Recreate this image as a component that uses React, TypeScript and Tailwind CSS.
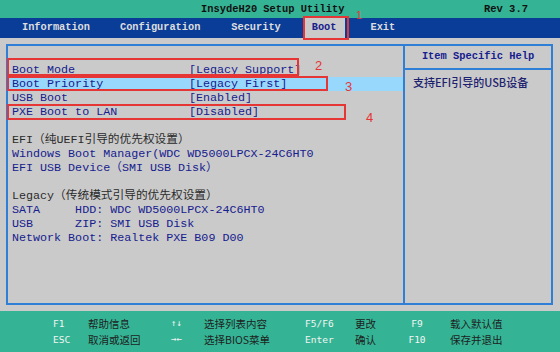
import React from "react";

const mono = { fontFamily: '"Liberation Mono", "Noto Sans CJK SC", monospace' };
const cjk = { fontFamily: '"Noto Sans CJK SC", "Noto Sans", sans-serif' };
const keyFont = { fontFamily: '"DejaVu Sans Mono", "Liberation Mono", monospace' };

function Row({ label, value, hl, dark }: { label: string; value?: string; hl?: boolean; dark?: boolean }) {
  return (
    <div
      className={`h-[14px] leading-[15px] pl-[4px] flex whitespace-pre ${hl ? "bg-[#99d8fd]" : ""} ${
        dark ? "text-[#2a2a2a]" : "text-[#16208e]"
      }`}
    >
      <span className={value !== undefined ? "w-[177px] shrink-0" : ""}>{label}</span>
      {value !== undefined && <span>{value}</span>}
    </div>
  );
}

export default function App() {
  const footer: [string, string, string, string, string, string, string, string][] = [
    ["F1", "帮助信息", "↑↓", "选择列表内容", "F5/F6", "更改", "F9", "载入默认值"],
    ["ESC", "取消或返回", "→←", "选择BIOS菜单", "Enter", "确认", "F10", "保存并退出"],
  ];
  return (
    <div className="relative w-[560px] h-[352px] overflow-hidden bg-[#cacaca] flex flex-col">
      {/* title bar */}
      <div className="h-[18px] bg-[#35b495] flex items-center pl-[201px] pr-[32px] text-[#111] font-bold" style={mono}>
        <span className="text-[10.4px] leading-[18px]">InsydeH20 Setup Utility</span>
        <span className="ml-auto text-[10.5px] leading-[18px]">Rev 3.7</span>
      </div>

      {/* menu bar */}
      <div className="h-[20px] bg-[#0a3d97] flex items-stretch pl-[22px] text-[10.3px] font-bold text-[#dedede]" style={mono}>
        <span className="flex items-center">Information</span>
        <span className="flex items-center ml-[30px]">Configuration</span>
        <span className="flex items-center ml-[31px]">Security</span>
        <span className="flex items-center ml-[22px] px-[9px] bg-[#cacaca] text-[#16208e]">Boot</span>
        <span className="flex items-center ml-[25px]">Exit</span>
      </div>

      {/* body */}
      <div className="flex-1 pl-[6px] pr-[7px] pt-[6px]">
        <div className="h-[261px] border-2 border-[#2f7fd6] flex text-[11.7px]" style={mono}>
          <div className="w-[397px] shrink-0 border-r-2 border-[#2f7fd6] pt-[17px]">
            <Row label="Boot Mode" value="[Legacy Support]" />
            <Row label="Boot Priority" value="[Legacy First]" hl />
            <Row label="USB Boot" value="[Enabled]" />
            <Row label="PXE Boot to LAN" value="[Disabled]" />
            <Row label=" " />
            <Row label="EFI（纯UEFI引导的优先权设置）" dark />
            <Row label="Windows Boot Manager(WDC WD5000LPCX-24C6HT0" />
            <Row label="EFI USB Device（SMI USB Disk）" />
            <Row label=" " />
            <Row label="Legacy（传统模式引导的优先权设置）" dark />
            <Row label="SATA     HDD: WDC WD5000LPCX-24C6HT0" />
            <Row label="USB      ZIP: SMI USB Disk" />
            <Row label="Network Boot: Realtek PXE B09 D00" />
          </div>
          <div className="flex-1 flex flex-col">
            <div className="h-[24px] border-b-2 border-[#2f7fd6] flex items-center justify-center text-[10.4px] font-bold text-[#16208e]">
              Item Specific Help
            </div>
            <div className="pt-[5px] pl-[8px] leading-[14px] text-[11px] font-medium text-[#1c2270]" style={cjk}>
              支持EFI引导的USB设备
            </div>
          </div>
        </div>
      </div>

      {/* footer */}
      <div className="h-[41px] bg-[#35b495] pl-[53px] pt-[5px]">
        <div className="grid grid-cols-[35px_83px_33px_101px_50px_45px_50px_auto] auto-rows-[16px] items-center">
          {footer.map((r, i) => (
            <React.Fragment key={i}>
              <span className="text-[9.5px] text-[#f4f4f4]" style={keyFont}>{r[0]}</span>
              <span className="text-[10.5px] text-[#1e1e1e]" style={cjk}>{r[1]}</span>
              <span className="text-[9px] text-[#f4f4f4]" style={keyFont}>{r[2]}</span>
              <span className="text-[10.5px] text-[#1e1e1e]" style={cjk}>{r[3]}</span>
              <span className="text-[9.5px] text-[#f4f4f4]" style={keyFont}>{r[4]}</span>
              <span className="text-[10.5px] text-[#1e1e1e]" style={cjk}>{r[5]}</span>
              <span className="text-[9.5px] text-[#f4f4f4] text-center pr-[16px]" style={keyFont}>{r[6]}</span>
              <span className="text-[10.5px] text-[#1e1e1e]" style={cjk}>{r[7]}</span>
            </React.Fragment>
          ))}
        </div>
      </div>

      {/* red annotation overlays */}
      <div className="absolute left-[303px] top-[16px] w-[46px] h-[24px] border-2 border-[#e53535]" />
      <div className="absolute left-[7px] top-[58px] w-[292px] h-[18px] border-2 border-[#e53535]" />
      <div className="absolute left-[7px] top-[76px] w-[321px] h-[15px] border-2 border-[#e53535]" />
      <div className="absolute left-[7px] top-[104px] w-[339px] h-[16px] border-2 border-[#e53535]" />
      <span className="absolute left-[356px] top-[10px] text-[11px] leading-none text-[#e53535]" style={{ fontFamily: '"Liberation Sans", sans-serif' }}>1</span>
      <span className="absolute left-[315px] top-[59px] text-[13px] leading-none text-[#e53535]" style={{ fontFamily: '"Liberation Sans", sans-serif' }}>2</span>
      <span className="absolute left-[345px] top-[80px] text-[13px] leading-none text-[#e53535]" style={{ fontFamily: '"Liberation Sans", sans-serif' }}>3</span>
      <span className="absolute left-[366px] top-[111px] text-[13px] leading-none text-[#e53535]" style={{ fontFamily: '"Liberation Sans", sans-serif' }}>4</span>
    </div>
  );
}
